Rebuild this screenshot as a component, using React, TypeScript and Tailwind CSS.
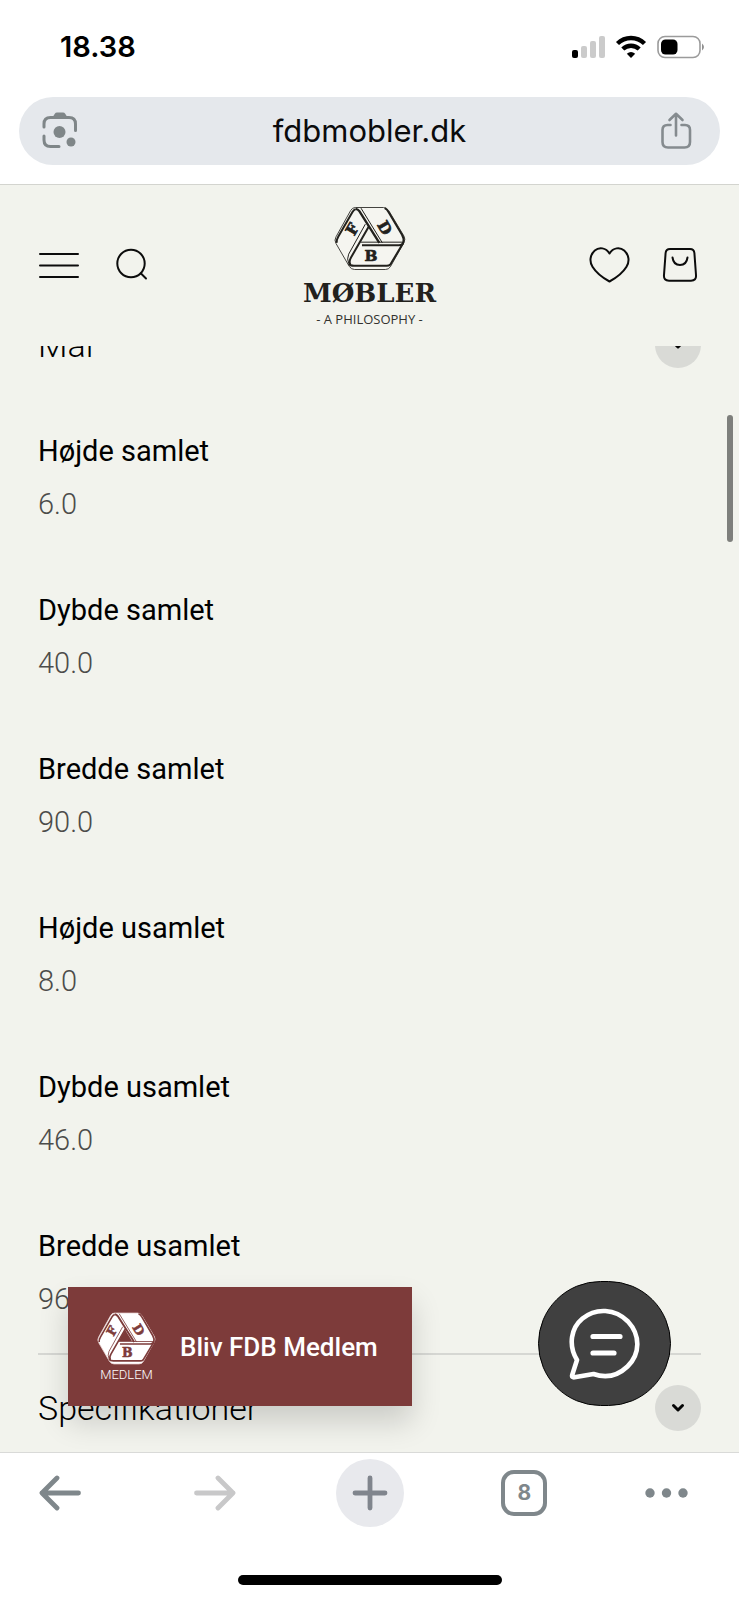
import React from 'react';

type Measure = { label: string; value: string };

const measures: Measure[] = [
  { label: 'Højde samlet', value: '6.0' },
  { label: 'Dybde samlet', value: '40.0' },
  { label: 'Bredde samlet', value: '90.0' },
  { label: 'Højde usamlet', value: '8.0' },
  { label: 'Dybde usamlet', value: '46.0' },
  { label: 'Bredde usamlet', value: '96.0' },
];

type EmblemProps = { className: string; ink: string; paper: string; outline: string; core: string };

function Emblem({ className, ink, paper, outline, core }: EmblemProps) {
  const letter = {
    fill: ink,
    stroke: ink,
    strokeWidth: 2,
    fontFamily: '"DejaVu Serif", serif',
    fontWeight: 700,
    fontSize: 46,
    textAnchor: 'middle' as const,
  };
  return (
    <svg viewBox="12 18 216 194" className={className} aria-hidden="true" fill="none">
      <path
        d="M76 22H160Q170 22 176 31L222 108Q227 117 222 127L181 200Q176 208 166 208H74Q64 208 58 199L18 130Q12 120 18 110L62 31Q67 22 76 22Z"
        fill={paper}
        stroke={outline}
        strokeWidth="3"
      />
      <path d="M115 83L92 124H140Z" fill={core} />
      <g stroke={ink} strokeLinejoin="round">
        <path d="M77 27Q71 29 67 36L25 109Q19 119 20 128" strokeWidth="6" />
        <path d="M164 24Q171 27 176 36L216 104Q223 117 220 126Q218 135 207 135H96" strokeWidth="6" />
        <path d="M220 128L181 193Q177 197 170 197H72Q60 197 56 190" strokeWidth="6" />
        <path d="M77 26Q84 27 88 33L148 128" strokeWidth="7" />
        <path d="M93 24L157 128" strokeWidth="3" />
        <path d="M106 72L56 162Q50 176 56 190" strokeWidth="3" />
        <path d="M116 80L63 172Q56 184 61 193" strokeWidth="6" />
        <path d="M92 126H222" strokeWidth="3" />
      </g>
      <text {...letter} transform="translate(81 95) rotate(-60)">F</text>
      <text {...letter} transform="translate(150 91) rotate(60)">D</text>
      <text {...letter} x="123" y="183">B</text>
    </svg>
  );
}

function StatusBar() {
  return (
    <div className="flex h-[97px] items-center justify-between pr-[34px] pb-[3px] pl-[60px]">
      <span className="font-['Inter',sans-serif] text-[29px] leading-9 font-semibold text-black">18.38</span>
      <div className="flex items-center gap-[10px]">
        <svg viewBox="0 0 33 22" className="h-[22px] w-[33px]" aria-hidden="true">
          <rect x="0" y="14" width="6" height="8" rx="2" fill="#000" />
          <rect x="9" y="10" width="6" height="12" rx="2" fill="#cbcbcb" />
          <rect x="18" y="5" width="6" height="17" rx="2" fill="#cbcbcb" />
          <rect x="27" y="0" width="6" height="22" rx="2" fill="#cbcbcb" />
        </svg>
        <svg viewBox="0 0 32 24" className="h-6 w-8" aria-hidden="true" fill="none" stroke="#000" strokeWidth="4.4">
          <path d="M2.5 8.5A19.5 19.5 0 0 1 29.5 8.5" />
          <path d="M7.8 14A12 12 0 0 1 24.2 14" />
          <path d="M16 23L11.8 18.8Q16 15.3 20.2 18.8Z" fill="#000" stroke="none" />
        </svg>
        <svg viewBox="0 0 48 24" className="h-6 w-12" aria-hidden="true">
          <rect x="1" y="1.5" width="42" height="21" rx="7" fill="none" stroke="#9b9b9b" strokeWidth="1.6" />
          <rect x="4" y="4.5" width="16.5" height="15" rx="4.5" fill="#000" />
          <path d="M45 8.5Q49 12 45 15.5Z" fill="#8f8f8f" />
        </svg>
      </div>
    </div>
  );
}

function AddressBar() {
  return (
    <div className="border-b border-[#d3d4cf] px-[19px] pb-[19px]">
      <div className="flex h-17 items-center justify-between rounded-full bg-[#e5e8ec] pr-[28px] pl-[22px]">
        <button type="button" aria-label="Søg med kamera">
          <svg viewBox="0 0 38 38" className="size-[38px]" fill="none" stroke="#7f8688" strokeWidth="3" strokeLinecap="round">
            <path d="M3 15V12Q3 5.5 9.5 5.5H28Q34.5 5.5 34.5 12V18.5" />
            <path d="M3 24V28Q3 34.5 9.5 34.5H18" />
            <path d="M11 6L14 1.5Q14.5 .5 16 .5H22Q23.5 .5 24 1.5L27 6Z" fill="#7f8688" stroke="none" />
            <circle cx="18.5" cy="20" r="6" fill="#7f8688" stroke="none" />
            <circle cx="30" cy="30" r="4.5" fill="#7f8688" stroke="none" />
          </svg>
        </button>
        <a href="#" className="font-['Inter',sans-serif] text-[31px] leading-10 text-[#0b0b0c]">fdbmobler.dk</a>
        <button type="button" aria-label="Del">
          <svg viewBox="0 0 32 38" className="h-[38px] w-8" fill="none" stroke="#858b8f" strokeWidth="2.6" strokeLinecap="round" strokeLinejoin="round">
            <path d="M10.5 13H7.5Q2.5 13 2.5 18V30Q2.5 35.5 8 35.5H24.5Q30 35.5 30 30V18Q30 13 25 13H21.5" />
            <path d="M16 23.5V2M9.5 8L16 1.8L22.5 8" />
          </svg>
        </button>
      </div>
    </div>
  );
}

function SiteHeader() {
  return (
    <header className="grid h-[161px] grid-cols-[1fr_auto_1fr] items-center bg-[#f2f3ed] px-[38px] pb-[2px]">
      <div className="flex items-center gap-[37px]">
        <button type="button" aria-label="Menu">
          <svg viewBox="0 0 41 34" className="h-[34px] w-[41px]" stroke="#0c0c0c" strokeWidth="2" strokeLinecap="round">
            <path d="M2 6H40M2 17.5H40M2 29H40" />
          </svg>
        </button>
        <button type="button" aria-label="Søg">
          <svg viewBox="0 0 34 34" className="size-[34px]" fill="none" stroke="#0c0c0c" strokeWidth="2" strokeLinecap="round">
            <circle cx="15" cy="15.5" r="13.7" />
            <path d="M25 25.5L30 30.5" />
          </svg>
        </button>
      </div>
      <a href="#" className="flex flex-col items-center pt-[6px]">
        <Emblem className="h-[65px] w-[72px]" ink="#22211d" paper="#f5f5f0" outline="#44433f" core="#f2f3ed" />
        <span className="mt-2 font-['DejaVu_Serif',serif] text-[26px] leading-7 font-bold text-[#22211d]">MØBLER</span>
        <span className="mt-[2px] font-['Open_Sans',sans-serif] text-[13px] leading-5 text-[#33322e]">- A PHILOSOPHY -</span>
      </a>
      <div className="flex items-center justify-end gap-[32px] pr-[3px]">
        <button type="button" aria-label="Favoritter">
          <svg viewBox="0 0 41 36" className="h-9 w-[41px]" fill="none" stroke="#0c0c0c" strokeWidth="2" strokeLinejoin="round">
            <path d="M20.5 6.5C17 .5 10 -.2 5.8 3.5C.8 8 .3 14.5 3.5 19.8C7 25.5 13 30.5 20.5 34.5C28 30.5 34 25.5 37.5 19.8C40.7 14.5 40.2 8 35.2 3.5C31 -.2 24 .5 20.5 6.5Z" />
          </svg>
        </button>
        <button type="button" aria-label="Kurv">
          <svg viewBox="0 0 36 36" className="size-9" fill="none" stroke="#0c0c0c" strokeWidth="2" strokeLinecap="round">
            <path d="M8 2H28Q32 2 32.4 6L34 28Q34.5 33.7 29 33.7H7Q1.5 33.7 2 28L3.6 6Q4 2 8 2Z" />
            <path d="M10.5 10.5Q11.5 18 18 18Q24.5 18 25.5 10.5" />
          </svg>
        </button>
      </div>
    </header>
  );
}

function SectionButton({ title, open }: { title: string; open: boolean }) {
  return (
    <h2>
      <button type="button" aria-expanded={open} className="flex h-[106px] w-full items-center justify-between text-left">
        <span className="text-[34px] leading-10 font-light text-black">{title}</span>
        <span className="flex size-[46px] items-center justify-center rounded-full bg-[#d9dad6]">
          <svg viewBox="0 0 14 10" className="h-[10px] w-[14px]" fill="none" stroke="#050505" strokeWidth="3" strokeLinecap="round" strokeLinejoin="round">
            <path d="M2.5 2.5L7 7L11.5 2.5" />
          </svg>
        </span>
      </button>
    </h2>
  );
}

function BrowserToolbar() {
  const line = { fill: 'none', strokeWidth: 4.8, strokeLinecap: 'round' as const, strokeLinejoin: 'round' as const };
  return (
    <footer className="flex flex-col items-center border-t border-[#d9dad8] bg-white pt-[6px] pb-[15px]">
      <nav className="flex w-full items-center justify-between px-[26px]" aria-label="Browser">
        <button type="button" aria-label="Tilbage" className="flex size-17 items-center justify-center">
          <svg viewBox="0 0 42 36" className="h-9 w-[42px]" stroke="#7f878b" {...line}>
            <path d="M39.5 18H3M18 3L3 18L18 33" />
          </svg>
        </button>
        <button type="button" aria-label="Frem" className="flex size-17 items-center justify-center">
          <svg viewBox="0 0 42 36" className="h-9 w-[42px]" stroke="#c8c8c9" {...line}>
            <path d="M2.5 18H39M24 3L39 18L24 33" />
          </svg>
        </button>
        <button type="button" aria-label="Ny fane" className="flex size-17 items-center justify-center rounded-full bg-[#e8e9ed]">
          <svg viewBox="0 0 36 36" className="size-9" stroke="#80858d" {...line}>
            <path d="M18 3V33M3 18H33" />
          </svg>
        </button>
        <button type="button" aria-label="8 faner" className="flex size-17 items-center justify-center">
          <span className="flex size-[46px] items-center justify-center rounded-[13px] border-4 border-[#7f878b] font-['Inter',sans-serif] text-[21px] leading-6 font-bold text-[#7f878b]">
            8
          </span>
        </button>
        <button type="button" aria-label="Mere" className="flex size-17 items-center">
          <svg viewBox="0 0 44 10" className="h-[10px] w-11" fill="#7f878b">
            <circle cx="5" cy="5" r="4.7" />
            <circle cx="21.5" cy="5" r="4.7" />
            <circle cx="38" cy="5" r="4.7" />
          </svg>
        </button>
      </nav>
      <div className="mt-[48px] h-[10px] w-[264px] rounded-full bg-black" />
    </footer>
  );
}

export default function App() {
  return (
    <div className="flex h-screen flex-col bg-white font-['Roboto',sans-serif]">
      <StatusBar />
      <AddressBar />
      <SiteHeader />
      <div className="relative min-h-0 flex-1 overflow-hidden bg-[#f2f3ed]">
        <main className="-mt-[54px] px-[38px]">
          <section className="border-b-2 border-[#d6d7d3] pb-[34px]">
            <SectionButton title="Mål" open />
            <dl className="flex flex-col gap-[66px] pt-[33px]">
              {measures.map((m) => (
                <div key={m.label} className="flex flex-col gap-[13px]">
                  <dt className="text-[29px] leading-10 text-black">{m.label}</dt>
                  <dd className="text-[29px] leading-10 font-light text-[#4c4c4a]">{m.value}</dd>
                </div>
              ))}
            </dl>
          </section>
          <section>
            <SectionButton title="Specifikationer" open={false} />
          </section>
        </main>
        <div className="absolute top-[69px] right-[6px] h-[127px] w-[6px] rounded-full bg-[#7e7f7c]" />
        <a href="#" className="absolute bottom-[46px] left-[68px] flex h-[119px] w-[344px] items-center gap-6 bg-[#7d3b3a] pl-[29px] text-white shadow-[0_16px_28px_rgba(0,0,0,0.16)]">
          <span className="flex flex-col items-center pt-[2px]">
            <Emblem className="h-[53px] w-[59px]" ink="#7d3b3a" paper="#ffffff" outline="#ecd9d8" core="#7d3b3a" />
            <span className="mt-[2px] text-[13px] leading-4 font-light">MEDLEM</span>
          </span>
          <span className="text-[26px] leading-8 font-medium whitespace-nowrap">Bliv FDB Medlem</span>
        </a>
        <button type="button" aria-label="Åbn chat" className="absolute right-[68px] bottom-[46px] flex h-[125px] w-[133px] items-center justify-center rounded-full border border-black bg-[#404040]">
          <svg viewBox="0 0 72 72" className="size-18" fill="none" stroke="#fff" strokeWidth="4.6" strokeLinecap="round" strokeLinejoin="round">
            <path d="M8 52C-1 37 2 20 13.5 10.5C27 -.5 46 .5 59 13.500C71.500 27 71.500 46 58.500 58.500C49 67.500 37 70.500 24.500 66L5.500 69.300Q2.500 69.600 3.200 67Z" />
            <path d="M24 28.500H51M24 45H45" strokeWidth="5.200" />
          </svg>
        </button>
      </div>
      <BrowserToolbar />
    </div>
  );
}
